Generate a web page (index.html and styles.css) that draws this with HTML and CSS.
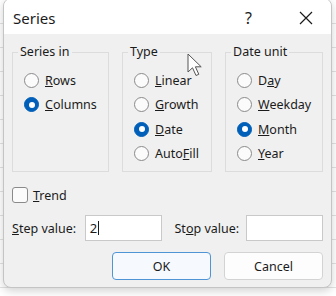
FILE: index.html
```html
<!DOCTYPE html>
<html>
<head>
    <meta charset="utf-8">
    <title>Series</title>
    <link rel="stylesheet" href="styles.css">
</head>
<body>
    <div class="dialog">
        <div class="titlebar">
            <div class="title">Series</div>
            <div class="help">?</div>
            <div class="close">
                <svg width="14" height="14" viewBox="0 0 14 14">
                    <path d="M1 1 L13 13 M13 1 L1 13" stroke="#1b1b1b" stroke-width="1.2" fill="none"/>
                </svg>
            </div>
        </div>

        <div class="content">
            <div class="groups">
                <!-- Series in -->
                <fieldset class="group group-series">
                    <legend>Series in</legend>
                    <div class="options">
                        <div class="option"><span class="radio"></span><span><u>R</u>ows</span></div>
                        <div class="option"><span class="radio checked"></span><span><u>C</u>olumns</span></div>
                    </div>
                </fieldset>

                <!-- Type -->
                <fieldset class="group group-type">
                    <legend>Type</legend>
                    <div class="options">
                        <div class="option"><span class="radio"></span><span><u>L</u>inear</span></div>
                        <div class="option"><span class="radio"></span><span><u>G</u>rowth</span></div>
                        <div class="option"><span class="radio checked"></span><span><u>D</u>ate</span></div>
                        <div class="option"><span class="radio"></span><span>Auto<u>F</u>ill</span></div>
                    </div>
                </fieldset>

                <!-- Date unit -->
                <fieldset class="group group-unit">
                    <legend>Date unit</legend>
                    <div class="options">
                        <div class="option"><span class="radio"></span><span>D<u>a</u>y</span></div>
                        <div class="option"><span class="radio"></span><span><u>W</u>eekday</span></div>
                        <div class="option"><span class="radio checked"></span><span><u>M</u>onth</span></div>
                        <div class="option"><span class="radio"></span><span><u>Y</u>ear</span></div>
                    </div>
                </fieldset>
            </div>

            <div class="trend">
                <span class="checkbox"></span><span><u>T</u>rend</span>
            </div>

            <div class="values">
                <div class="label step-label"><u>S</u>tep value:</div>
                <div class="field"><span>2</span><span class="caret"></span></div>
                <div class="label stop-label">St<u>o</u>p value:</div>
                <div class="field"></div>
            </div>

            <div class="buttons">
                <div class="btn btn-ok">OK</div>
                <div class="btn">Cancel</div>
            </div>
        </div>
    </div>

    <!-- mouse pointer -->
    <svg class="pointer" width="18" height="26" viewBox="0 0 18 26">
        <path d="M1 1 L1 19 L5.5 14.8 L9 22.5 L11.8 21.3 L8.4 13.8 L14.2 13.8 Z" fill="#ffffff" stroke="#555" stroke-width="1" stroke-linejoin="round"/>
    </svg>
</body>
</html>
```

FILE: styles.css
```css
* {
    margin: 0;
    padding: 0;
    box-sizing: border-box;
}

body {
    width: 336px;
    height: 296px;
    overflow: hidden;
    position: relative;
    font-family: 'Noto Sans', 'Open Sans', sans-serif;
    font-size: 12.5px;
    color: #1b1b1b;
    background-color: #ffffff;
    background-image: repeating-linear-gradient(to bottom, transparent 0, transparent 23px, #e2e2e2 23px, #e2e2e2 24px);
}

.dialog {
    margin: -2px 0 0 3px;
    width: 329px;
    height: 290px;
    background: #f0f0f0;
    border: 1px solid #c4c4c4;
    border-radius: 8px;
    box-shadow: 0 3px 10px rgba(0, 0, 0, 0.18);
    overflow: hidden;
}

.titlebar {
    height: 35px;
    background: #ffffff;
    display: flex;
    align-items: center;
    padding: 2px 0 0 9px;
}

.title {
    flex: 1;
    font-size: 15px;
}

.help {
    font-size: 16px;
    width: 8px;
    margin-right: 46px;
    color: #1b1b1b;
}

.close {
    width: 14px;
    height: 14px;
    margin-right: 18px;
    display: flex;
}

.content {
    padding: 11px 8px 0 8px;
}

.groups {
    display: flex;
    gap: 13px;
}

.group {
    border: 1px solid #dcdcdc;
    height: 127px;
    padding: 0;
}

.group-series { width: 97px; }
.group-type { width: 90px; }
.group-unit { width: 98px; }

legend {
    margin-left: 5px;
    padding: 0 2px;
    line-height: 14px;
}

.options {
    padding: 9px 0 0 11px;
}

.option {
    height: 24.5px;
    display: flex;
    align-items: center;
    gap: 6px;
}

.radio {
    width: 15px;
    height: 15px;
    border-radius: 50%;
    border: 1px solid #8a8a8a;
    background: #fbfbfb;
    display: flex;
    align-items: center;
    justify-content: center;
    flex-shrink: 0;
}

.radio.checked {
    background: #005fb8;
    border-color: #005fb8;
}

.radio.checked::after {
    content: '';
    width: 6px;
    height: 6px;
    border-radius: 50%;
    background: #ffffff;
}

.trend {
    margin-top: 15px;
    height: 16px;
    display: flex;
    align-items: center;
    gap: 5px;
}

.checkbox {
    width: 16px;
    height: 16px;
    border: 1px solid #8a8a8a;
    border-radius: 3px;
    background: #fbfbfb;
}

.values {
    margin-top: 12px;
    display: flex;
    align-items: center;
    height: 26px;
}

.label {
    white-space: nowrap;
}

.step-label { width: 73px; }

.stop-label {
    width: 72px;
    margin-left: 13px;
}

.field {
    width: 77px;
    height: 26px;
    background: #ffffff;
    border: 1px solid #c9c9c9;
    display: flex;
    align-items: center;
    padding-left: 4px;
    font-size: 13px;
}

.caret {
    width: 1px;
    height: 14px;
    background: #1b1b1b;
    margin-left: 1px;
}

.buttons {
    margin-top: 11px;
    display: flex;
    justify-content: flex-end;
    gap: 13px;
}

.btn {
    width: 99px;
    height: 28px;
    border: 1px solid #d3d3d3;
    border-radius: 4px;
    background: #fdfdfd;
    display: flex;
    align-items: center;
    justify-content: center;
}

.btn-ok {
    border-color: #4f94d4;
    background: #f6f9fd;
}

.pointer {
    position: absolute;
    left: 187px;
    top: 53px;
}
```
